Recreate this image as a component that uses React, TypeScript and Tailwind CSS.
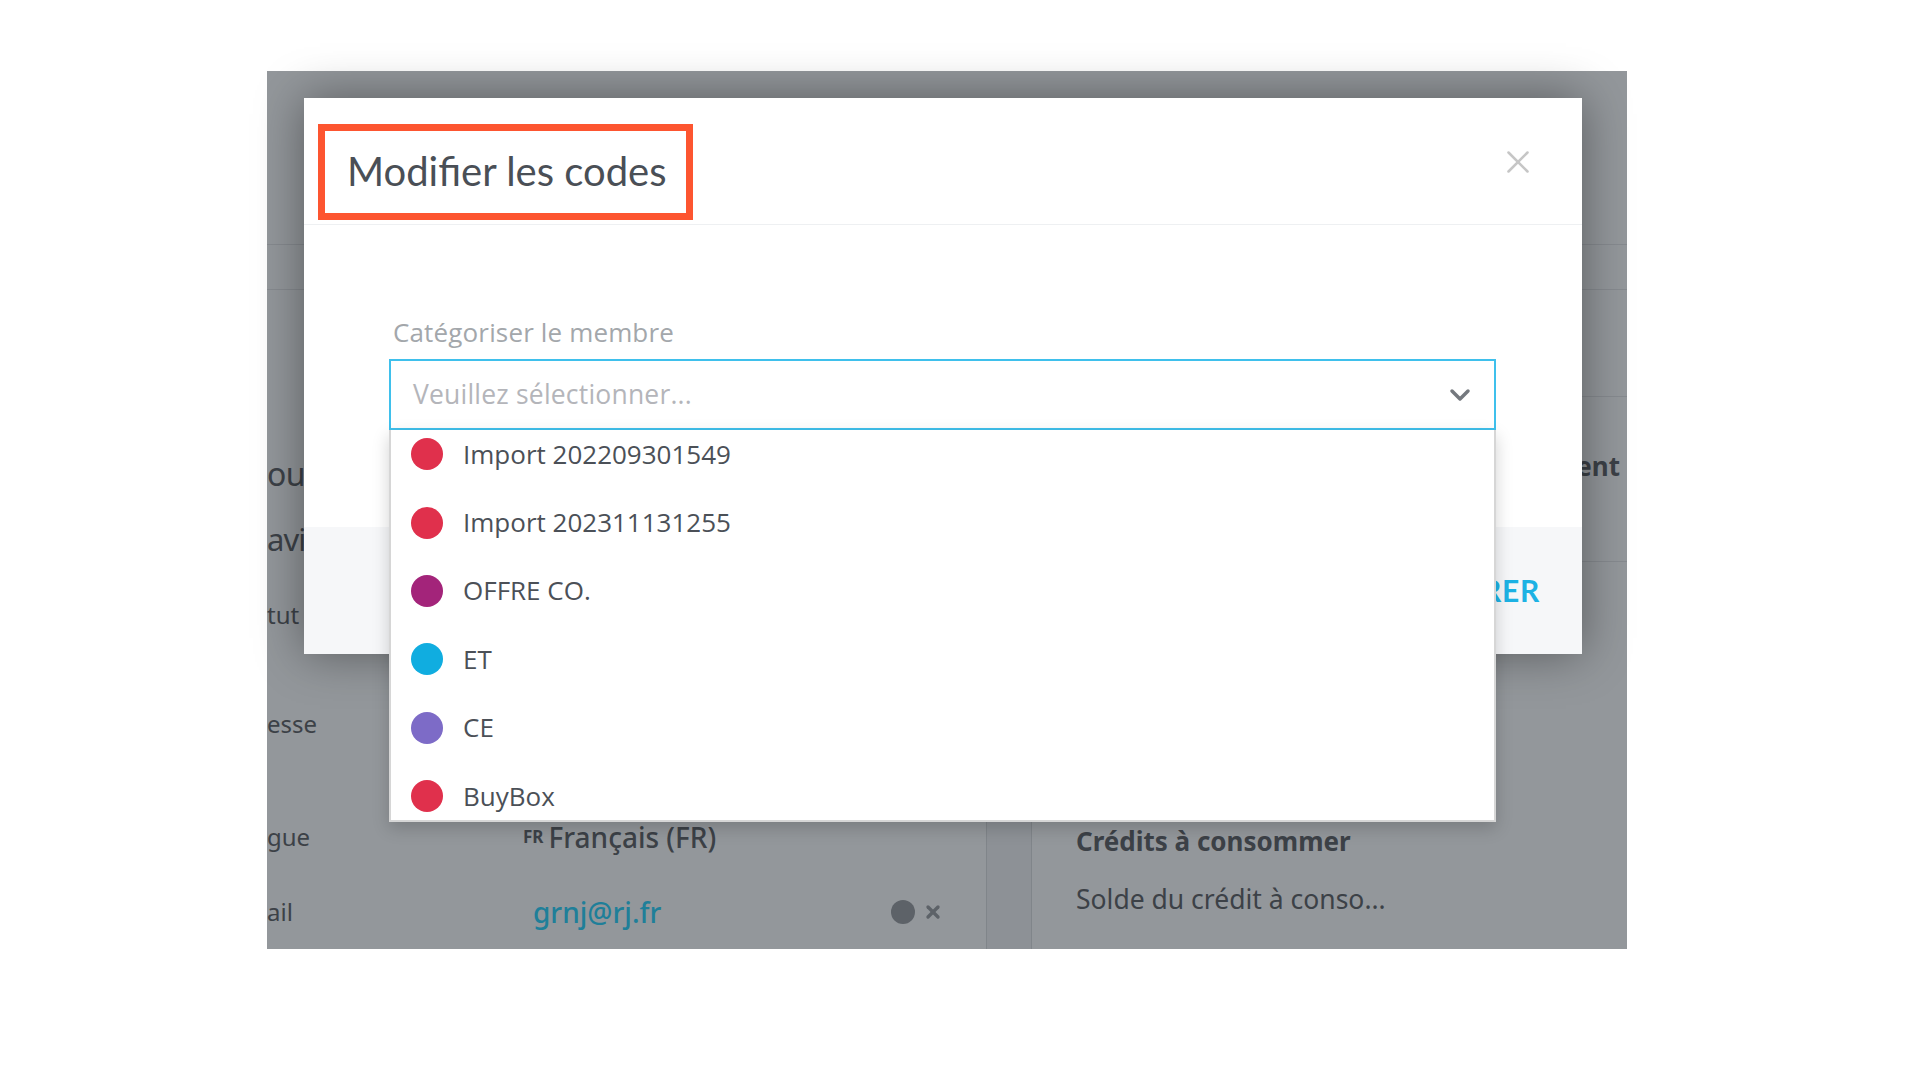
import { X } from "lucide-react";

const codes = [
    { label: "Import 202209301549", color: "bg-[#e0304c]" },
    { label: "Import 202311131255", color: "bg-[#e0304c]" },
    { label: "OFFRE CO.", color: "bg-[#a3247a]" },
    { label: "ET", color: "bg-[#10ade0]" },
    { label: "CE", color: "bg-[#7d6bc7]" },
    { label: "BuyBox", color: "bg-[#e0304c]" },
];

const Background = () => {
    return (
        <div className="w-full h-full flex flex-col font-['Noto_Sans',sans-serif] text-[#3c4147]">
            <div className="h-[174px] border-b border-[#868a8f]" />
            <div className="h-[45px] border-b border-[#868a8f]" />

            <div className="flex flex-1">
                <div className="w-[719px] flex flex-col">
                    <div className="h-[159px]" />
                    <div className="h-[50px] flex items-center text-[32px] tracking-[-0.5px]">ou</div>
                    <div className="h-[80px] flex items-center text-[31px] tracking-[-1px]">avi</div>
                    <div className="h-[72px] flex items-center text-[24px]">tut</div>
                    <div className="h-[146px] flex items-center text-[24px]">esse</div>
                    <div className="h-[80px] flex items-center text-[24px] whitespace-nowrap">
                        <span className="w-[256px]">gue</span>
                        <span className="text-[17px] font-bold mr-[5px]">FR</span>
                        <span className="text-[28px] font-medium">Français (FR)</span>
                    </div>
                    <div className="h-[70px] flex items-center text-[24px] whitespace-nowrap">
                        <span className="w-[266px]">ail</span>
                        <span className="text-[28px] font-medium text-[#1f7f99] w-[358px]">grnj@rj.fr</span>
                        <span className="w-[24px] h-[24px] rounded-full bg-[#5d6268]" />
                        <X className="ml-[8px] text-[#5d6268]" size={20} strokeWidth={4} />
                    </div>
                </div>

                <div className="w-[46px] bg-[#8d9196] border-x border-[#80858a]" />

                <div className="flex-1 flex flex-col">
                    <div className="h-[107px] border-b border-[#868a8f]" />
                    <div className="h-[165px] border-b border-[#868a8f] flex justify-end pr-[7px] pt-[50px] text-[26px] font-bold whitespace-nowrap">
                        Paiement
                    </div>
                    <div className="h-[250px]" />
                    <div className="h-[58px] flex items-center pl-[44px] text-[26px] font-bold">Crédits à consommer</div>
                    <div className="h-[60px] flex items-center pl-[44px] text-[26.5px]">Solde du crédit à conso...</div>
                </div>
            </div>
        </div>
    );
};

const CodesSelect = () => {
    return (
        <div className="relative ml-[85px] w-[1107px] font-['Open_Sans',sans-serif]">
            <div className="h-[71px] border-2 border-[#3fc0ec] bg-white flex items-center justify-between pl-[22px] pr-[23px]">
                <span className="text-[26.5px] tracking-[0.2px] text-[#b4b5ba]">Veuillez sélectionner...</span>

                <svg width="22" height="14" viewBox="0 0 22 14" fill="none">
                    <path d="M3 3l8 8 8-8" stroke="#74787e" strokeWidth="3.5" strokeLinecap="round" strokeLinejoin="round" />
                </svg>
            </div>

            <div className="absolute top-full left-0 right-0 h-[392px] bg-white border-x-2 border-b-2 border-[#d6d6d6] shadow-[0_6px_16px_rgba(0,0,0,0.18)] overflow-hidden">
                <ul className="-mt-[10px]">
                    {codes.map((code) => (
                        <li key={code.label} className="h-[68.4px] flex items-center">
                            <span className={`ml-[20px] w-[32px] h-[32px] rounded-full ${code.color}`} />
                            <span className="ml-[20px] text-[26px] text-[#4b5057]">{code.label}</span>
                        </li>
                    ))}
                </ul>
            </div>
        </div>
    );
};

const App = () => {
    return (
        <div className="w-[1920px] h-[1080px] bg-white pt-[71px] pl-[267px] font-['Lato',sans-serif]">
            <div className="relative w-[1360px] h-[878px] bg-[#93979b]">
                <Background />

                <div className="absolute left-[37px] top-[27px] w-[1278px] h-[556px] bg-white flex flex-col shadow-[0_0_45px_rgba(0,0,0,0.4)]">
                    <div className="relative h-[127px] border-b border-[#eef0f2] flex items-start justify-between">
                        <h2 className="mt-[53px] pl-[43px] text-[40px] leading-none text-[#4a4f56] font-normal">
                            Modifier les codes
                        </h2>

                        <X className="mt-[45px] mr-[45px] text-[#c6c6c6]" size={38} strokeWidth={1.6} />

                        <div className="absolute left-[14px] top-[26px] w-[375px] h-[96px] border-[7px] border-[#fd5530]" />
                    </div>

                    <div className="h-[302px] pt-[94px] relative z-10">
                        <p className="pl-[89px] text-[26px] tracking-[0.15px] leading-none text-[#a3a7ab] font-['Open_Sans',sans-serif]">
                            Catégoriser le membre
                        </p>

                        <div className="mt-[14px]">
                            <CodesSelect />
                        </div>
                    </div>

                    <div className="h-[127px] bg-[#f6f7f9] flex items-center justify-end pr-[42px]">
                        <span className="text-[30px] font-bold text-[#1db2e4] tracking-wide">ENREGISTRER</span>
                    </div>
                </div>
            </div>
        </div>
    );
};

export default App;
